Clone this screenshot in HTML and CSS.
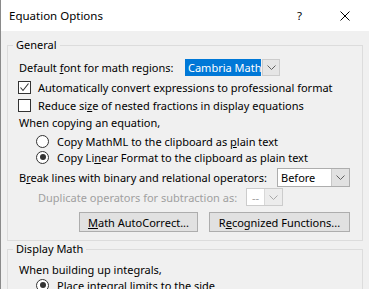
FILE: index.html
```html
<!DOCTYPE html>
<html lang="en">
<head>
    <meta charset="UTF-8">
    <title>Equation Options</title>
    <link rel="stylesheet" href="styles.css">
</head>
<body>
    <div class="window">
        <div class="titlebar">
            <span class="title">Equation Options</span>
            <span class="help">?</span>
            <svg class="close" width="10" height="10" viewBox="0 0 10 10">
                <path d="M0.5 0.5 L9.5 9.5 M9.5 0.5 L0.5 9.5" stroke="#000" stroke-width="1" fill="none"/>
            </svg>
        </div>
        <div class="content">
            <fieldset class="group general">
                <legend>General</legend>

                <div class="row font-row">
                    <span class="row-label">Default <u>f</u>ont for math regions:</span>
                    <div class="combo font-combo">
                        <span class="combo-value selected">Cambria Math</span>
                        <span class="combo-btn">
                            <svg width="9" height="5" viewBox="0 0 9 5"><polyline points="0.5,0.5 4.5,4.5 8.5,0.5" fill="none" stroke="#606060"/></svg>
                        </span>
                    </div>
                </div>

                <div class="row check-row first-check">
                    <span class="checkbox">
                        <svg width="11" height="11" viewBox="0 0 11 11"><polyline points="1.5,5.5 4,8.5 9.5,1.5" fill="none" stroke="#333" stroke-width="1.1"/></svg>
                    </span>
                    <span>Automatically convert expressions to professional format</span>
                </div>
                <div class="row check-row">
                    <span class="checkbox"></span>
                    <span>Reduce si<u>z</u>e of nested fractions in display equations</span>
                </div>

                <div class="row text-row">When copying an equation,</div>
                <div class="row radio-row first-radio">
                    <span class="radio"></span>
                    <span>Copy MathML to the clipboard as <u>p</u>lain text</span>
                </div>
                <div class="row radio-row">
                    <span class="radio checked"></span>
                    <span>Copy Li<u>n</u>ear Format to the clipboard as plain text</span>
                </div>

                <div class="row break-row">
                    <span>B<u>r</u>eak lines with binary and relational operators:</span>
                    <div class="combo before-combo">
                        <span class="combo-value">Before</span>
                        <span class="combo-btn">
                            <svg width="9" height="5" viewBox="0 0 9 5"><polyline points="0.5,0.5 4.5,4.5 8.5,0.5" fill="none" stroke="#606060"/></svg>
                        </span>
                    </div>
                </div>

                <div class="row dup-row">
                    <span class="row-label disabled">Duplicate operators for subtraction as:</span>
                    <div class="combo dup-combo">
                        <span class="combo-value">--</span>
                        <span class="combo-btn">
                            <svg width="9" height="5" viewBox="0 0 9 5"><polyline points="0.5,0.5 4.5,4.5 8.5,0.5" fill="none" stroke="#a8a8a8"/></svg>
                        </span>
                    </div>
                </div>

                <div class="row button-row">
                    <button class="btn autocorrect-btn"><u>M</u>ath AutoCorrect...</button>
                    <button class="btn functions-btn">R<u>e</u>cognized Functions...</button>
                </div>
            </fieldset>

            <fieldset class="group display">
                <legend>Display Math</legend>
                <div class="row text-row">When building up integrals,</div>
                <div class="row radio-row">
                    <span class="radio checked"></span>
                    <span>Place integral limits to the side</span>
                </div>
            </fieldset>
        </div>
    </div>
</body>
</html>
```

FILE: styles.css
```css
body {
    margin: 0;
    font-family: "Noto Sans", "Open Sans", sans-serif;
    font-size: 11px;
    color: #000;
    background: #f0f0f0;
}
.window {
    width: 369px;
    height: 289px;
    box-sizing: border-box;
    border-left: 1px solid #8a8a8a;
    background: #f0f0f0;
    overflow: hidden;
}
.titlebar {
    height: 31px;
    background: #fff;
    display: flex;
    align-items: center;
    padding-left: 8px;
    padding-right: 19px;
    font-size: 11.5px;
}
.title {
    flex: 1;
}
.help {
    margin-right: 38px;
}
.content {
    padding: 6px 6px 0 6px;
}
.group {
    margin: 0;
    min-width: 0;
    border: 1px solid #dcdcdc;
    padding: 5px 12px 8px 11px;
}
.group legend {
    padding: 0 3px;
    margin-left: -6px;
    line-height: 16px;
}
.display {
    padding-top: 4px;
}
.row {
    display: flex;
    align-items: center;
    height: 18px;
    white-space: nowrap;
}
.text-row {
    height: 16px;
}
.font-row .row-label {
    width: 166px;
}
.first-check {
    margin-top: 2px;
}
.checkbox {
    width: 11px;
    height: 11px;
    border: 1px solid #333;
    background: #fff;
    margin-left: -1px;
    margin-right: 7px;
    display: flex;
    align-items: center;
    justify-content: center;
}
.radio-row {
    height: 16px;
}
.first-radio {
    margin-top: 3px;
}
.radio {
    width: 11px;
    height: 11px;
    border: 1px solid #333;
    border-radius: 50%;
    background: #fff;
    margin-left: 17px;
    margin-right: 8px;
    position: relative;
}
.radio.checked::after {
    content: "";
    position: absolute;
    left: 2.5px;
    top: 2.5px;
    width: 6px;
    height: 6px;
    border-radius: 50%;
    background: #333;
}
.combo {
    display: flex;
    box-sizing: border-box;
}
.combo-value {
    flex: 1;
    display: flex;
    align-items: center;
}
.combo-btn {
    display: flex;
    align-items: center;
    justify-content: center;
    box-sizing: border-box;
}
.font-combo {
    height: 17px;
}
.font-combo .combo-value {
    width: 76px;
    padding-left: 3px;
    box-sizing: border-box;
}
.selected {
    background: #0078d7;
    color: #fff;
}
.font-combo .combo-btn {
    width: 18px;
    margin-left: 1px;
    background: #e5e5e5;
    border: 1px solid #cccccc;
}
.break-row {
    height: 20px;
    margin-top: 2px;
}
.before-combo {
    margin-left: auto;
    width: 73px;
    height: 19px;
    border: 1px solid #adadad;
    background: #fff;
}
.before-combo .combo-value {
    padding-left: 3px;
}
.before-combo .combo-btn {
    width: 18px;
    background: #e1e1e1;
    border-left: 1px solid #c8c8c8;
}
.dup-row {
    margin-top: 1px;
    padding-left: 19px;
}
.dup-row .row-label {
    width: 208px;
}
.disabled {
    color: #a0a0a0;
}
.dup-combo {
    width: 37px;
    height: 18px;
    border: 1px solid #cccccc;
    background: #fff;
    color: #a0a0a0;
}
.dup-combo .combo-value {
    padding-left: 5px;
}
.dup-combo .combo-btn {
    width: 18px;
    background: #ececec;
    border-left: 1px solid #d8d8d8;
}
.button-row {
    height: 20px;
    margin-top: 6px;
    justify-content: flex-end;
    gap: 11px;
}
.btn {
    height: 20px;
    margin: 0;
    padding: 0;
    font-family: inherit;
    font-size: 11px;
    color: #000;
    background: #e1e1e1;
    border: 1px solid #adadad;
}
.autocorrect-btn {
    width: 119px;
}
.functions-btn {
    width: 141px;
}
```
